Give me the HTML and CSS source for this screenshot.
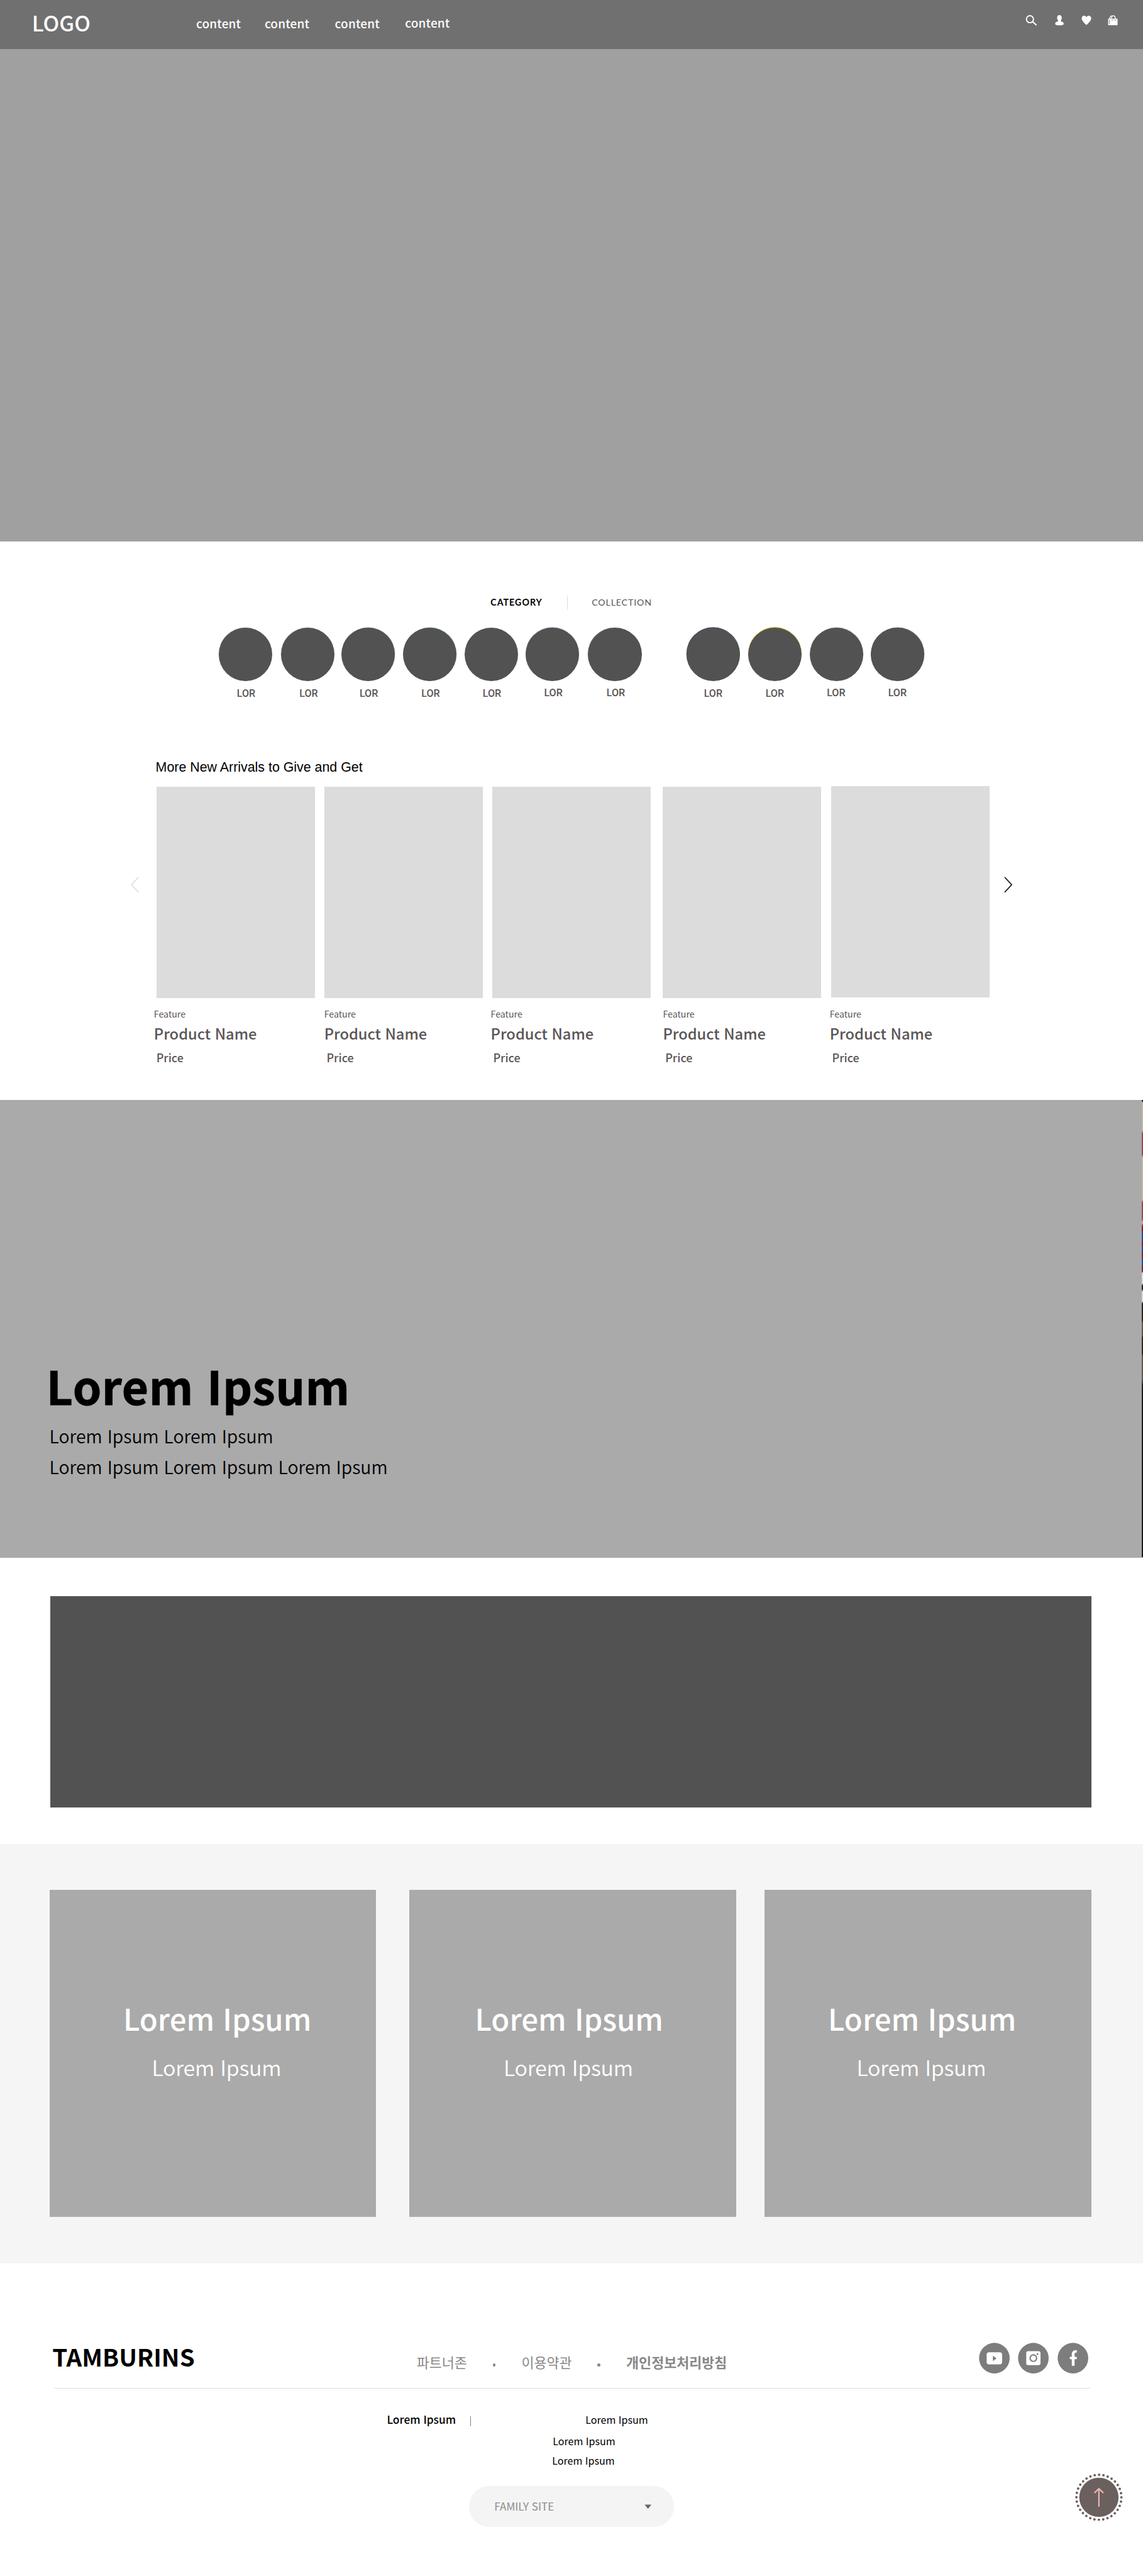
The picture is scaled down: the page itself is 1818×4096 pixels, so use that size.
FILE: index.html
```html
<!DOCTYPE html>
<html lang="ko">
<head>
<meta charset="utf-8">
<title>Home</title>
<link rel="stylesheet" href="styles.css">
</head>
<body>
<div class="page">
  <header class="header">
    <div class="logo">LOGO</div>
    <nav class="menu"><a>content</a><a>content</a><a>content</a><a class="raised">content</a></nav>
    <div class="tools">
      <svg width="20" height="18" viewBox="0 0 20 18"><circle cx="7.6" cy="6.9" r="5.9" fill="none" stroke="#fff" stroke-width="2"/><path d="M12 11l6.6 6" stroke="#fff" stroke-width="2.2"/></svg>
      <svg width="15" height="18" viewBox="0 0 15 18"><path d="M7.5 0C10 0 11.4 1.900 11.400 4.500c0 1.800-.6 3.200-1.500 4.200v1.800c2.600.5 4.800 1.700 4.800 3.900 0 2-3 2.800-7.200 2.800S.3 16.400.3 14.400c0-2.200 2.200-3.400 4.800-3.900V8.700C4.200 7.700 3.600 6.300 3.600 4.500 3.600 1.900 5 0 7.500 0z" fill="#fff"/></svg>
      <svg width="17" height="16" viewBox="0 0 17 16"><path d="M8.500 2.400C9.500.6 11 0 12.500 0c2.400 0 4 1.900 4 4.300 0 4.200-4.600 8.200-6.700 10.300-.9.900-1.700.9-2.600 0C5.100 12.500.5 8.500.5 4.300.5 1.900 2.100 0 4.500 0c1.500 0 3 .6 4 2.400z" fill="#fff"/></svg>
      <svg width="17" height="18" viewBox="0 0 17 18"><path d="M.6 6h15.800v11H.6z" fill="#fff"/><path d="M3.200 7c.2-3.500 1-5.600 3.600-5.800M6 7c.2-4 1-6 3.300-6s3.300 2 3.600 6" fill="none" stroke="#fff" stroke-width="1.500"/><path d="M2.800 7.500v7.500" stroke="#707070" stroke-width=".9"/><circle cx="7.300" cy="8.300" r=".9" fill="#707070"/><circle cx="12.500" cy="8.300" r=".9" fill="#707070"/></svg>
    </div>
  </header>
  <section class="hero"></section>

  <section class="category">
    <div class="tabs"><span class="tab-on">CATEGORY</span><i class="tab-line"></i><span class="tab-off">COLLECTION</span></div>
    <div class="circles">
      <div class="circle-item"><i class="c-tan"></i><span>LOR</span></div>
      <div class="circle-item"><i class="c-tan"></i><span>LOR</span></div>
      <div class="circle-item"><i class="c-green"></i><span>LOR</span></div>
      <div class="circle-item"><i class="c-teal"></i><span>LOR</span></div>
      <div class="circle-item"><i></i><span>LOR</span></div>
      <div class="circle-item raised"><i class="c-blue"></i><span>LOR</span></div>
      <div class="circle-item raised"><i class="c-tan"></i><span>LOR</span></div>
      <div class="circle-item centered"><i class="c-navy"></i><span>LOR</span></div>
      <div class="circle-item centered"><i class="c-gold"></i><span>LOR</span></div>
      <div class="circle-item centered raised"><i class="c-sage"></i><span>LOR</span></div>
      <div class="circle-item centered raised"><i class="c-rose"></i><span>LOR</span></div>
    </div>
  </section>

  <section class="arrivals">
    <h2>More New Arrivals to Give and Get</h2>
    <div class="carousel">
      <svg class="arrow" width="14" height="27" viewBox="0 0 14 27"><path d="M13 .8L1.200 13.500 13 26.200" fill="none" stroke="#dcdcdc" stroke-width="1.600"/></svg>
      <div class="products">
        <article class="p1"><div class="thumb"></div><div class="info"><p class="feature">Feature</p><p class="name">Product Name</p><p class="price">Price</p></div></article>
        <article class="p2"><div class="thumb"></div><div class="info"><p class="feature">Feature</p><p class="name">Product Name</p><p class="price">Price</p></div></article>
        <article class="p3"><div class="thumb"></div><div class="info"><p class="feature">Feature</p><p class="name">Product Name</p><p class="price">Price</p></div></article>
        <article class="p4"><div class="thumb"></div><div class="info"><p class="feature">Feature</p><p class="name">Product Name</p><p class="price">Price</p></div></article>
        <article class="p5"><div class="thumb"></div><div class="info"><p class="feature">Feature</p><p class="name">Product Name</p><p class="price">Price</p></div></article>
      </div>
      <svg class="arrow" width="14" height="27" viewBox="0 0 14 27"><path d="M1 .8L12.800 13.500 1 26.200" fill="none" stroke="#111" stroke-width="1.800"/></svg>
    </div>
  </section>

  <section class="banner">
    <div class="banner-text">
      <h1>Lorem Ipsum</h1>
      <p>Lorem Ipsum Lorem Ipsum</p>
      <p>Lorem Ipsum Lorem Ipsum Lorem Ipsum</p>
    </div>
    <div class="banner-edge"></div>
  </section>

  <section class="strip"><div></div></section>

  <section class="cards">
    <div class="card k1"><h3>Lorem Ipsum</h3><p>Lorem Ipsum</p></div>
    <div class="card k2"><h3>Lorem Ipsum</h3><p>Lorem Ipsum</p></div>
    <div class="card k3"><h3>Lorem Ipsum</h3><p>Lorem Ipsum</p></div>
  </section>

  <footer class="footer">
    <div class="foot-top">
      <div class="brand">TAMBURINS</div>
      <div class="links"><span>파트너존</span><i></i><span>이용약관</span><i></i><b>개인정보처리방침</b></div>
      <div class="social">
        <svg width="52" height="52" viewBox="0 0 52 52"><circle cx="26" cy="26" r="25.700" fill="#7d7d7d"/><rect x="13" y="16" width="26" height="20.500" rx="4" fill="#fff"/><path d="M23.500 21.800v9l6.200-4.500z" fill="#7d7d7d"/></svg>
        <svg width="52" height="52" viewBox="0 0 52 52"><circle cx="26" cy="26" r="25.700" fill="#7d7d7d"/><rect x="14" y="14.300" width="24" height="23.500" rx="3.500" fill="#fff"/><circle cx="26" cy="26" r="5.500" fill="none" stroke="#7d7d7d" stroke-width="2.200"/><circle cx="33" cy="19.200" r="1.500" fill="#7d7d7d"/></svg>
        <svg width="52" height="52" viewBox="0 0 52 52"><circle cx="26" cy="26" r="25.700" fill="#7d7d7d"/><path d="M24 38.700V27.600h-3.200v-3.800H24v-4.200c0-4.500 2.600-7 6.600-7h1.900v4.100h-1.700c-1.500 0-2.100 1-2.100 2.600v4.500h3.700v3.800h-3.700v11.100z" fill="#fff"/></svg>
      </div>
    </div>
    <div class="company">
      <div class="row"><span class="strong">Lorem Ipsum</span><i class="bar"></i><span class="second">Lorem Ipsum</span></div>
      <div class="row line2">Lorem Ipsum</div>
      <div class="row line3">Lorem Ipsum</div>
    </div>
    <div class="family"><span>FAMILY SITE</span><svg width="12" height="8" viewBox="0 0 12 8"><path d="M.3.500h11.400L6 7.600z" fill="#666"/></svg></div>
  </footer>

  <svg class="to-top" width="80" height="80" viewBox="0 0 80 80"><circle cx="40" cy="40" r="37.800" fill="none" stroke="#6b605d" stroke-width="4.200" stroke-linecap="round" stroke-dasharray="0 7.422"/><circle cx="40" cy="40" r="33" fill="#6b605d"/><path d="M40 55V26M33 32l7-6.500 7 6.500" fill="none" stroke="#e9b4b0" stroke-width="2.400" stroke-linecap="round" stroke-linejoin="round"/></svg>
</div>
</body>
</html>
```
FILE: styles.css
```css
* { box-sizing: border-box; margin: 0; padding: 0; }
html { background: #fff; overflow: hidden; }
body { font-family: "Noto Sans CJK KR", "Noto Sans", sans-serif; }
svg { display: block; flex: none; }
h1, h2, h3, p, span, a, b { white-space: nowrap; }

/* The design grid is 1920 wide; the page is shown at 1818. */
.page { position: relative; width: 1920px; height: 4326px; zoom: 0.946875; overflow: hidden; }

.header { height: 82px; background: #707070; color: #fff; display: flex; align-items: flex-start; padding-left: 53.500px; }
.logo { width: 276px; padding-top: 18.300px; font-size: 36px; line-height: 40px; font-weight: 500; }
.menu { display: flex; padding-top: 27.500px; font-size: 20px; line-height: 24px; font-weight: 500; letter-spacing: 0.200px; width: 1393px; }
.menu a { width: 118px; }
.menu a:first-child { width: 115px; }
.menu a.raised { margin-top: -1px; }
.tools { display: flex; padding-top: 25px; }
.tools svg { margin-right: 30px; }
.tools svg:nth-child(2) { margin-right: 29px; }
.tools svg:nth-child(3) { margin: 1.500px 27.500px 0 0; }

.hero { height: 827px; background: #a0a0a0; }

.category { height: 366px; padding-top: 91px; }
.tabs { display: flex; padding-left: 824px; font: 700 15px/24px Lato, sans-serif; color: #000; }
.tab-on { width: 128.500px; letter-spacing: 1.100px; }
.tab-line { width: 1px; height: 23px; background: #ddd; }
.tab-off { margin-left: 40.500px; font-weight: 400; color: #555; letter-spacing: 0.900px; }
.circles { display: grid; margin: 30px 0 0 367px; grid-template-columns: 105px 101px 104px 103px 103px 105px 165.500px 103.500px 103px 103px 90px; }
.circle-item { width: 90px; }
.circle-item i { display: block; width: 90px; height: 90px; border-radius: 50%; background: #525252; }
.circle-item span { display: block; margin: 11px 0 0 3px; text-align: center; font: 500 17px/20px Roboto, sans-serif; color: #5a5556; }
.circle-item.raised span { margin-top: 10px; }
.circle-item.centered span { margin-left: -1px; }
.circle-item .c-tan { box-shadow: -0.700px -0.500px 0 #e6d9cc; }
.circle-item .c-green { box-shadow: 0.300px -0.600px 0 #8fb585; }
.circle-item .c-teal { box-shadow: 0.300px -0.600px 0 #86b8ae; }
.circle-item .c-blue { box-shadow: 0 -0.700px 0 #8499b5; }
.circle-item .c-navy { box-shadow: -0.300px -0.800px 0 #3d3a72; }
.circle-item .c-gold { box-shadow: 0 -1px 0 #e0b52c; }
.circle-item .c-sage { box-shadow: 0.400px -0.700px 0 #c3cab8; }
.circle-item .c-rose { box-shadow: 0.300px -0.600px 0 #8d7474; }

.arrivals { height: 572px; }
.arrivals h2 { padding: 0.500px 0 0 261.500px; font: 400 22.600px/26px "Liberation Sans", Arial, sans-serif; color: #000; }
.carousel { display: flex; margin: 19.500px 0 0 220px; }
.arrow { margin-top: 151px; }
.products { display: grid; grid-template-columns: 282px 282px 286px 283px 266px; margin: 0 24.500px 0 29px; }
.thumb { width: 266px; height: 355px; background: #dcdcdc; }
.p5 .thumb { margin: -1px 0 1px; }
.info { padding-top: 16.500px; color: #5a5556; }
.p1 .info { margin-left: -4.400px; }
.p2 .info { margin-left: -0.400px; }
.p3 .info { margin-left: -2.600px; }
.p4 .info { margin-left: 0.600px; }
.p5 .info { margin-left: -2.200px; }
.feature { font-size: 15px; line-height: 20px; }
.name { margin-top: 7.500px; font-size: 25px; line-height: 30px; font-weight: 500; }
.price { margin: 13.700px 0 0 4px; font-size: 19px; line-height: 24px; font-weight: 500; }

.banner { height: 769px; background: #aaa; color: #000; display: flex; justify-content: space-between; }
.banner-text { padding: 434px 0 0 78px; }
.banner h1 { font-size: 77px; line-height: 90px; font-weight: 700; letter-spacing: 0.850px; -webkit-text-stroke: 1px #000; }
.banner p { margin-left: 5px; font-size: 30px; line-height: 52px; font-weight: 350; }
.banner h1 + p { margin-top: 13.700px; }
.banner-edge { width: 2px; height: 768px; background: linear-gradient(#222 0 2px, #c9b594 4px 52px, #9b4a42 56px 92px, #c9b594 96px 168px, #9b4a42 172px 200px, #c9c0b0 206px, #8a2028 212px 222px, #1450b8 223px 237px, #8a2028 238px 246px, #1450b8 247px 254px, #8a2028 255px 266px, #1450b8 267px 277px, #8a2028 278px 288px, #dcdcdc 291px 308px, #222 312px 318px, #dcdcdc 322px 338px, #2c211a 342px 370px, #6a5340 374px 395px, #33261e 400px 425px, #6a5340 430px 470px, #1c1a18 480px); }

.strip { height: 480px; padding: 64px 87px 0 84px; }
.strip div { height: 355px; background: #525252; }

.cards { height: 705px; padding: 78px 0 0 83px; background: #f5f5f5; display: flex; }
.card { width: 549px; height: 549px; background: #aaa; color: #fff; padding-top: 189px; }
.k1 { padding-left: 124px; margin-right: 56px; }
.k2 { padding-left: 110px; margin-right: 47px; }
.k3 { padding-left: 107px; }
.card h3 { font-size: 50px; line-height: 52px; font-weight: 500; }
.card p { margin: 36.500px 0 0 48px; font-size: 36px; line-height: 40px; font-weight: 350; letter-spacing: -0.300px; }

.footer { padding: 130px 0 0 88px; }
.foot-top { display: flex; align-items: flex-start; width: 1740px; height: 80.500px; border-bottom: 1px solid #ddd; margin-left: 3px; }
.brand { width: 612px; margin-left: -3px; padding-top: 0.500px; font-size: 40.600px; line-height: 50px; font-weight: 700; color: #000; }
.links { display: flex; width: 944px; padding-top: 21px; font-size: 23px; line-height: 30px; color: #888; }
.links span { width: 84px; }
.links i { width: 5px; height: 5px; margin: 17px 43.500px 0; border-radius: 50%; background: #888; }
.social { display: flex; gap: 14.300px; padding-top: 3px; }
.company { padding-top: 39.500px; font-size: 17px; line-height: 24px; color: #000; }
.row { display: flex; height: 24px; }
.strong { margin-left: 562px; width: 140px; font-size: 18.300px; font-weight: 500; }
.bar { width: 1px; height: 17px; margin-top: 7px; background: #8f817b; }
.second { margin-left: 192.500px; }
.line2 { margin: 12.600px 0 0 840.500px; }
.line3 { margin: 8px 0 0 839.500px; }
.family { display: flex; align-items: center; justify-content: space-between; width: 345px; height: 68px; margin: 31.500px 0 0 699.500px; padding: 0 38px 0 43px; border-radius: 34px; background: #f4f4f4; font-size: 18px; line-height: 24px; color: #8d8d8d; }

/* floating back-to-top button */
.to-top { position: absolute; left: 1806px; top: 4153.300px; }
```
